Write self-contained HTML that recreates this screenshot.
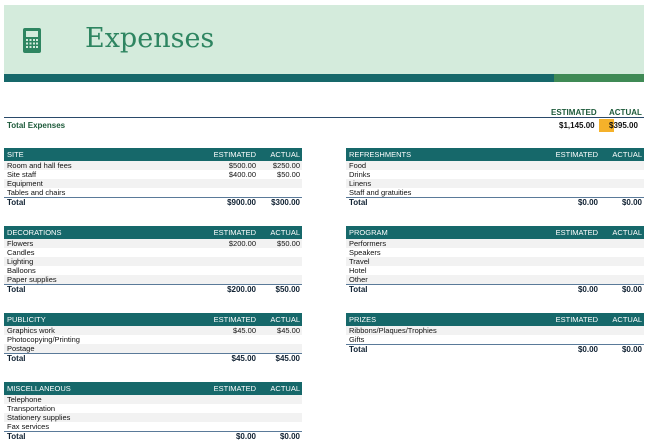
<!DOCTYPE html><html><head><style>
*{margin:0;padding:0;box-sizing:border-box}
body{width:650px;height:444px;background:#fff;font-family:"Liberation Sans",sans-serif;position:relative;overflow:hidden;font-size:7.5px;color:#111}
.ban{position:absolute;left:4px;top:5px;width:640px;height:69px;background:#d4ebdc}
.bar1{position:absolute;left:4px;top:74px;width:550px;height:8px;background:#16686a}
.bar2{position:absolute;left:554px;top:74px;width:90px;height:8px;background:#3f8a55}
.title{position:absolute;left:85px;top:22px;font-family:"DejaVu Serif",serif;font-size:27px;color:#2e8561;line-height:34px}
.t{position:absolute;width:298px}
.h{height:13px;background:#16686a;color:#fff;display:flex;align-items:center;font-size:7.5px}
.r{height:9px;display:flex;align-items:center}
.r:nth-child(even){background:#f2f2f2}
.tot{height:9px;display:flex;align-items:center;border-top:1px solid #5a7a99;font-weight:bold;font-size:8px;color:#123}
.n{flex:1;padding-left:3px}
.e{width:60px;text-align:right}
.a{width:46px;text-align:right;padding-right:2px}
</style></head><body>
<div class="ban"></div>
<svg style="position:absolute;left:23px;top:28px" width="18" height="25" viewBox="0 0 18 25"><rect width="18" height="25" rx="2" fill="#2e8561"/><rect x="3" y="3" width="12" height="6" fill="#d4ebdc"/><g fill="#d4ebdc"><rect x="3" y="11" width="2" height="2"/><rect x="6.5" y="11" width="2" height="2"/><rect x="10" y="11" width="2" height="2"/><rect x="13" y="11" width="2" height="2"/><rect x="3" y="14.5" width="2" height="2"/><rect x="6.5" y="14.5" width="2" height="2"/><rect x="10" y="14.5" width="2" height="2"/><rect x="13" y="14.5" width="2" height="2"/><rect x="3" y="18" width="2" height="2"/><rect x="6.5" y="18" width="2" height="2"/><rect x="10" y="18" width="2" height="2"/><rect x="13" y="18" width="2" height="2"/></g></svg>
<div class="title">Expenses</div>
<div class="bar1"></div><div class="bar2"></div>
<div style="position:absolute;left:551px;top:108px;font-weight:bold;color:#1d5a3a;font-size:8px">ESTIMATED</div>
<div style="position:absolute;left:609px;top:108px;font-weight:bold;color:#1d5a3a;font-size:8px">ACTUAL</div>
<div style="position:absolute;left:4px;top:117px;width:640px;border-top:1px solid #2a4a6a"></div>
<div style="position:absolute;left:599px;top:119px;width:15px;height:13px;background:#f5b12a"></div>
<div style="position:absolute;left:7px;top:121px;font-weight:bold;color:#1d5a3a;font-size:8px">Total Expenses</div>
<div style="position:absolute;left:559px;top:121px;font-weight:bold;font-size:8px">$1,145.00</div>
<div style="position:absolute;left:609px;top:121px;font-weight:bold;font-size:8px">$395.00</div>

<div class="t" style="left:4px;top:148px"><div class="h"><span class="n">SITE</span><span class="e">ESTIMATED</span><span class="a">ACTUAL</span></div>
<div class="r"><span class="n">Room and hall fees</span><span class="e">$500.00</span><span class="a">$250.00</span></div>
<div class="r"><span class="n">Site staff</span><span class="e">$400.00</span><span class="a">$50.00</span></div>
<div class="r"><span class="n">Equipment</span></div><div class="r"><span class="n">Tables and chairs</span></div>
<div class="tot"><span class="n">Total</span><span class="e">$900.00</span><span class="a">$300.00</span></div></div>

<div class="t" style="left:346px;top:148px"><div class="h"><span class="n">REFRESHMENTS</span><span class="e">ESTIMATED</span><span class="a">ACTUAL</span></div>
<div class="r"><span class="n">Food</span></div><div class="r"><span class="n">Drinks</span></div><div class="r"><span class="n">Linens</span></div><div class="r"><span class="n">Staff and gratuities</span></div>
<div class="tot"><span class="n">Total</span><span class="e">$0.00</span><span class="a">$0.00</span></div></div>

<div class="t" style="left:4px;top:226px"><div class="h"><span class="n">DECORATIONS</span><span class="e">ESTIMATED</span><span class="a">ACTUAL</span></div>
<div class="r"><span class="n">Flowers</span><span class="e">$200.00</span><span class="a">$50.00</span></div>
<div class="r"><span class="n">Candles</span></div><div class="r"><span class="n">Lighting</span></div><div class="r"><span class="n">Balloons</span></div><div class="r"><span class="n">Paper supplies</span></div>
<div class="tot"><span class="n">Total</span><span class="e">$200.00</span><span class="a">$50.00</span></div></div>

<div class="t" style="left:346px;top:226px"><div class="h"><span class="n">PROGRAM</span><span class="e">ESTIMATED</span><span class="a">ACTUAL</span></div>
<div class="r"><span class="n">Performers</span></div><div class="r"><span class="n">Speakers</span></div><div class="r"><span class="n">Travel</span></div><div class="r"><span class="n">Hotel</span></div><div class="r"><span class="n">Other</span></div>
<div class="tot"><span class="n">Total</span><span class="e">$0.00</span><span class="a">$0.00</span></div></div>

<div class="t" style="left:4px;top:313px"><div class="h"><span class="n">PUBLICITY</span><span class="e">ESTIMATED</span><span class="a">ACTUAL</span></div>
<div class="r"><span class="n">Graphics work</span><span class="e">$45.00</span><span class="a">$45.00</span></div>
<div class="r"><span class="n">Photocopying/Printing</span></div><div class="r"><span class="n">Postage</span></div>
<div class="tot"><span class="n">Total</span><span class="e">$45.00</span><span class="a">$45.00</span></div></div>

<div class="t" style="left:346px;top:313px"><div class="h"><span class="n">PRIZES</span><span class="e">ESTIMATED</span><span class="a">ACTUAL</span></div>
<div class="r"><span class="n">Ribbons/Plaques/Trophies</span></div><div class="r"><span class="n">Gifts</span></div>
<div class="tot"><span class="n">Total</span><span class="e">$0.00</span><span class="a">$0.00</span></div></div>

<div class="t" style="left:4px;top:382px"><div class="h"><span class="n">MISCELLANEOUS</span><span class="e">ESTIMATED</span><span class="a">ACTUAL</span></div>
<div class="r"><span class="n">Telephone</span></div><div class="r"><span class="n">Transportation</span></div><div class="r"><span class="n">Stationery supplies</span></div><div class="r"><span class="n">Fax services</span></div>
<div class="tot"><span class="n">Total</span><span class="e">$0.00</span><span class="a">$0.00</span></div></div>
</body></html>
